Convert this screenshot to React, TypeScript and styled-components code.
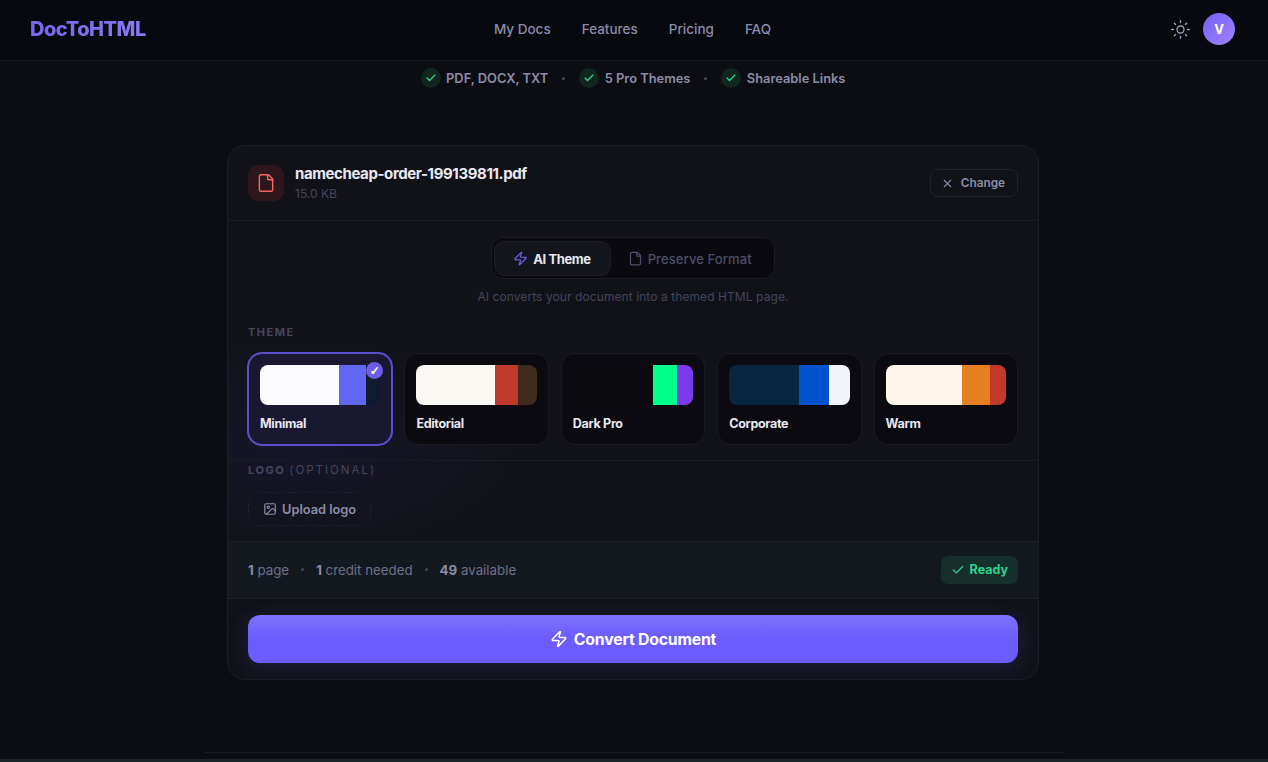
import React from "react";
import styled, { createGlobalStyle } from "styled-components";
import { Check, File, ImageIcon, Sun, X, Zap } from "lucide-react";

const GlobalStyle = createGlobalStyle`
  html, body {
    margin: 0;
    height: 100%;
    overflow: hidden;
    background: #0b0b12;
  }
  * {
    box-sizing: border-box;
  }
`;

const Page = styled.div`
  display: flex;
  flex-direction: column;
  height: 762px;
  background: #0c0c13;
  color: #e8e8f0;
  font-family: Inter, "Liberation Sans", sans-serif;
`;

const Header = styled.header`
  display: grid;
  grid-template-columns: 1fr auto 1fr;
  align-items: center;
  flex: none;
  height: 61px;
  padding: 0 33px 2px 30px;
  background: #08080f;
  border-bottom: 1px solid #14141c;
`;

const Logo = styled.div`
  font-size: 20px;
  font-weight: 800;
  letter-spacing: -0.5px;
  background: linear-gradient(90deg, #7566ee, #c4b8ff);
  -webkit-background-clip: text;
  background-clip: text;
  color: transparent;
`;

const Nav = styled.nav`
  display: flex;
  gap: 31px;
`;

const NavLink = styled.a`
  font-size: 13.5px;
  font-weight: 500;
  color: #8c8ca6;
`;

const HeaderActions = styled.div`
  display: flex;
  align-items: center;
  justify-content: flex-end;
  gap: 12px;
  color: #a0a0b8;
`;

const Avatar = styled.div`
  display: flex;
  align-items: center;
  justify-content: center;
  width: 32px;
  height: 32px;
  padding-bottom: 1px;
  border-radius: 50%;
  background: linear-gradient(135deg, #7360f2, #a084ff);
  color: #fff;
  font-size: 13px;
  font-weight: 700;
`;

const TrustRow = styled.div`
  display: flex;
  align-items: center;
  justify-content: center;
  flex: none;
  gap: 14px;
  height: 34px;
  padding-right: 2px;
`;

const TrustItem = styled.div`
  display: flex;
  align-items: center;
  gap: 5.5px;
  font-size: 12.85px;
  font-weight: 600;
  color: #8c8ca6;
`;

const TrustCheck = styled.span`
  display: flex;
  align-items: center;
  justify-content: center;
  width: 20px;
  height: 20px;
  border-radius: 50%;
  background: #10261f;
  color: #2dd48f;
`;

const Dot = styled.span<{ $color?: string }>`
  width: 3px;
  height: 3px;
  border-radius: 50%;
  background: ${({ $color }) => $color || "#4a4a60"};
`;

const Main = styled.main`
  display: flex;
  justify-content: center;
  flex: 1;
  padding: 50px 2px 0 0;
`;

const Card = styled.section`
  width: 812px;
  height: 535px;
  overflow: hidden;
  background: radial-gradient(
      ellipse 220px 110px at 9% 56%,
      #17162a 0,
      rgba(23, 22, 42, 0) 100%
    ),
    #111218;
  border: 1px solid #1c1d25;
  border-radius: 18px;
`;

const FileRow = styled.div`
  display: flex;
  align-items: center;
  gap: 11px;
  height: 75px;
  padding: 0 20px;
  border-bottom: 1px solid #1a1b23;
`;

const FileIcon = styled.div`
  display: flex;
  align-items: center;
  justify-content: center;
  flex: none;
  width: 36px;
  height: 36px;
  border-radius: 10px;
  background: #2d171d;
  color: #f26565;
`;

const FileInfo = styled.div`
  flex: 1;
  padding-bottom: 2px;
`;

const FileName = styled.div`
  font-size: 15px;
  font-weight: 700;
  line-height: 19px;
  letter-spacing: -0.4px;
  color: #e8e8f0;
`;

const FileSize = styled.div`
  margin-top: 3px;
  font-size: 12px;
  line-height: 15px;
  color: #45455c;
`;

const ChangeButton = styled.button`
  display: flex;
  align-items: center;
  gap: 7px;
  height: 28px;
  padding: 0 12px 0 10px;
  background: transparent;
  border: 1px solid #20212b;
  border-radius: 8px;
  color: #8c8ca6;
  font-family: inherit;
  font-size: 11.8px;
  font-weight: 600;
`;

const Body = styled.div`
  padding: 16px 20px 0;
`;

const TabBar = styled.div`
  display: flex;
  width: fit-content;
  height: 42px;
  margin: 0 auto;
  padding: 3px 2px 2px;
  background: #09090f;
  border: 1px solid #1a1b23;
  border-radius: 12px;
`;

const Tab = styled.div<{ $active?: boolean }>`
  display: flex;
  align-items: center;
  gap: 5px;
  padding: ${({ $active }) => ($active ? "0 19px 0 18px" : "0 19px 0 16px")};
  background: ${({ $active }) => ($active ? "#14151c" : "transparent")};
  border: 1px solid ${({ $active }) => ($active ? "#1c1d26" : "transparent")};
  border-radius: 10px;
  color: ${({ $active }) => ($active ? "#e8e8f0" : "#4f4f68")};
  font-size: 13px;
  font-weight: ${({ $active }) => ($active ? 700 : 500)};
  letter-spacing: ${({ $active }) => ($active ? "-0.4px" : "0.1px")};
  svg {
    color: ${({ $active }) => ($active ? "#6c5ce7" : "#4f4f68")};
  }
`;

const Hint = styled.p`
  margin: 10px 0 0;
  font-size: 12px;
  line-height: 16px;
  letter-spacing: 0.08px;
  text-align: center;
  color: #45455c;
`;

const SectionLabel = styled.div`
  font-size: 11px;
  font-weight: 700;
  line-height: 14px;
  letter-spacing: 1.5px;
  text-transform: uppercase;
  color: #45455c;
  span {
    font-size: 11.5px;
    font-weight: 400;
    letter-spacing: 2px;
  }
`;

const ThemeSection = styled.div`
  margin-top: 20px;
  padding-bottom: 15px;
`;

const ThemeGrid = styled.div`
  display: grid;
  grid-template-columns: repeat(5, 1fr);
  gap: 12px;
  margin-top: 14px;
`;

const ThemeCard = styled.div<{ $selected?: boolean }>`
  position: relative;
  height: 92px;
  padding: 11px;
  background: ${({ $selected }) => ($selected ? "#1a1730" : "#0a0a10")};
  border: 1px solid ${({ $selected }) => ($selected ? "#5b4fcf" : "#191a22")};
  box-shadow: ${({ $selected }) => ($selected ? "0 0 0 1px #5b4fcf" : "none")};
  border-radius: 14px;
`;

const Swatch = styled.div`
  display: flex;
  height: 40px;
  overflow: hidden;
  border-radius: 8px;
`;

const SwatchPart = styled.div<{ $color: string; $grow: number }>`
  flex: ${({ $grow }) => $grow} 0 0;
  background: ${({ $color }) => $color};
`;

const ThemeName = styled.div`
  margin-top: 11px;
  font-size: 12.5px;
  font-weight: 700;
  line-height: 16px;
  letter-spacing: -0.3px;
  color: #e8e8f0;
`;

const SelectedBadge = styled.span`
  position: absolute;
  top: 8px;
  right: 8px;
  display: flex;
  align-items: center;
  justify-content: center;
  width: 17px;
  height: 17px;
  border-radius: 50%;
  background: #6c5ce7;
  color: #fff;
  font-family: "DejaVu Sans", sans-serif;
  font-size: 12px;
  font-weight: 700;
  line-height: 1;
  -webkit-text-stroke: 0.5px #fff;
`;

const LogoSection = styled.div`
  margin: 0 -20px;
  padding: 2px 20px 15px;
  border-top: 1px solid #1a1b23;
`;

const UploadButton = styled.button`
  display: flex;
  align-items: center;
  gap: 5px;
  height: 34px;
  margin-top: 15px;
  padding: 0 14px;
  background: transparent;
  border: 1px dashed #20212b;
  border-radius: 10px;
  color: #8c8ca6;
  font-family: inherit;
  font-size: 12.8px;
  font-weight: 600;
`;

const StatsRow = styled.div`
  display: flex;
  align-items: center;
  justify-content: space-between;
  height: 58px;
  padding: 0 20px 1px;
  background: #14191f;
  border-top: 1px solid #191d24;
  border-bottom: 1px solid #22232a;
`;

const Stats = styled.div`
  display: flex;
  align-items: center;
  gap: 12px;
  font-size: 13.3px;
  color: #6f6f88;
  strong {
    font-weight: 700;
    color: #8c8ca6;
  }
`;

const ReadyBadge = styled.div`
  display: flex;
  align-items: center;
  gap: 5px;
  height: 28px;
  padding: 0 10px;
  background: #15302a;
  border-radius: 7px;
  color: #2dd48f;
  font-size: 12.5px;
  font-weight: 700;
`;

const CtaWrap = styled.div`
  padding: 16px 20px;
`;

const ConvertButton = styled.button`
  display: flex;
  align-items: center;
  justify-content: center;
  gap: 6px;
  width: 100%;
  height: 48px;
  background: linear-gradient(#7f71ff, #6c5cff 50%);
  border: 0;
  border-radius: 12px;
  box-shadow: 0 4px 20px rgba(108, 92, 255, 0.18);
  color: #fff;
  font-family: inherit;
  font-size: 15.8px;
  font-weight: 700;
  letter-spacing: -0.2px;
`;

const FooterRule = styled.div`
  flex: none;
  width: 860px;
  height: 7px;
  margin: 0 auto;
  border-top: 1px solid #191a22;
`;

const BottomStrip = styled.div`
  flex: none;
  height: 3px;
  background: #1a2426;
`;

const themes = [
  { name: "Minimal", parts: [["#fbfbfe", 79], ["#6366f1", 28], ["#0f1a2e", 14]] },
  { name: "Editorial", parts: [["#faf8f3", 78], ["#c0392b", 23], ["#3f2b1e", 19]] },
  { name: "Dark Pro", parts: [["#0a0a0f", 80], ["#00ff88", 24], ["#7c3aed", 16]] },
  { name: "Corporate", parts: [["#0a2540", 70], ["#0052cc", 29], ["#f0f4f8", 21]] },
  { name: "Warm", parts: [["#fff5eb", 77], ["#e67e22", 28], ["#c0392b", 16]] }
] as { name: string; parts: [string, number][] }[];

const trust = ["PDF, DOCX, TXT", "5 Pro Themes", "Shareable Links"];

const App: React.FunctionComponent<{}> = () => {
  return (
    <Page>
      <GlobalStyle />
      <Header>
        <Logo>DocToHTML</Logo>
        <Nav>
          <NavLink>My Docs</NavLink>
          <NavLink>Features</NavLink>
          <NavLink>Pricing</NavLink>
          <NavLink>FAQ</NavLink>
        </Nav>
        <HeaderActions>
          <Sun size={21} strokeWidth={1.5} />
          <Avatar>V</Avatar>
        </HeaderActions>
      </Header>
      <TrustRow>
        {trust.map((item, i) => (
          <React.Fragment key={item}>
            {i > 0 && <Dot />}
            <TrustItem>
              <TrustCheck>
                <Check size={12} strokeWidth={2.5} />
              </TrustCheck>
              {item}
            </TrustItem>
          </React.Fragment>
        ))}
      </TrustRow>
      <Main>
        <Card>
          <FileRow>
            <FileIcon>
              <File size={20} strokeWidth={1.75} />
            </FileIcon>
            <FileInfo>
              <FileName>namecheap-order-199139811.pdf</FileName>
              <FileSize>15.0 KB</FileSize>
            </FileInfo>
            <ChangeButton>
              <X size={13} strokeWidth={2} />
              Change
            </ChangeButton>
          </FileRow>
          <Body>
            <TabBar>
              <Tab $active>
                <Zap size={15} strokeWidth={2} />
                AI Theme
              </Tab>
              <Tab>
                <File size={15} strokeWidth={2} />
                Preserve Format
              </Tab>
            </TabBar>
            <Hint>AI converts your document into a themed HTML page.</Hint>
            <ThemeSection>
              <SectionLabel>Theme</SectionLabel>
              <ThemeGrid>
                {themes.map((theme, i) => (
                  <ThemeCard key={theme.name} $selected={i === 0}>
                    <Swatch>
                      {theme.parts.map(([color, grow]) => (
                        <SwatchPart key={color} $color={color} $grow={grow} />
                      ))}
                    </Swatch>
                    <ThemeName>{theme.name}</ThemeName>
                    {i === 0 && <SelectedBadge>✓</SelectedBadge>}
                  </ThemeCard>
                ))}
              </ThemeGrid>
            </ThemeSection>
            <LogoSection>
              <SectionLabel>
                Logo <span>(optional)</span>
              </SectionLabel>
              <UploadButton>
                <ImageIcon size={14} strokeWidth={2} />
                Upload logo
              </UploadButton>
            </LogoSection>
          </Body>
          <StatsRow>
            <Stats>
              <span>
                <strong>1</strong> page
              </span>
              <Dot $color="#45455c" />
              <span>
                <strong>1</strong> credit needed
              </span>
              <Dot $color="#45455c" />
              <span>
                <strong>49</strong> available
              </span>
            </Stats>
            <ReadyBadge>
              <Check size={14} strokeWidth={2} />
              Ready
            </ReadyBadge>
          </StatsRow>
          <CtaWrap>
            <ConvertButton>
              <Zap size={18} strokeWidth={2} />
              Convert Document
            </ConvertButton>
          </CtaWrap>
        </Card>
      </Main>
      <FooterRule />
      <BottomStrip />
    </Page>
  );
};

export default App;
